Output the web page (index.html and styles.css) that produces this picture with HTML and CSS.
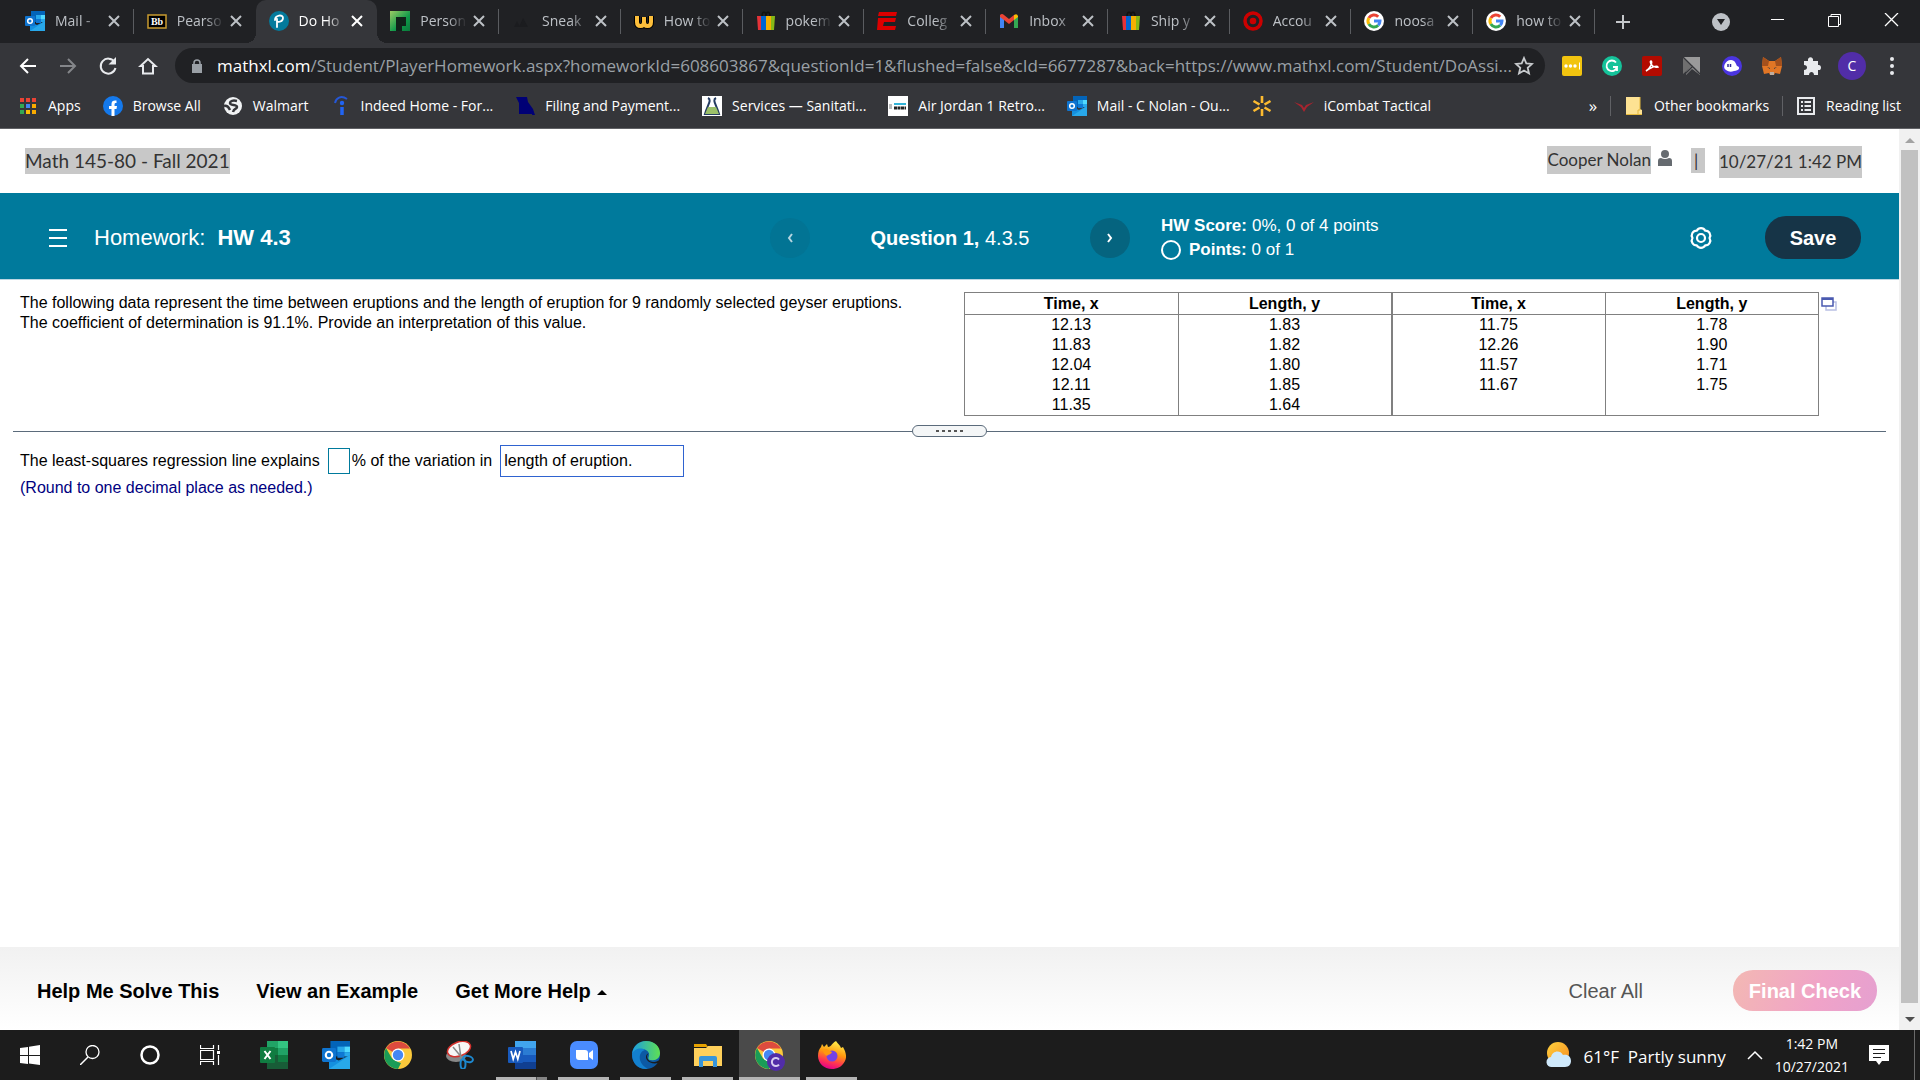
FILE: index.html
```html
<!DOCTYPE html>
<html lang="en">
<head>
    <meta charset="UTF-8">
    <meta name="viewport" content="width=device-width, initial-scale=1.0">
    <title>Do Homework - HW 4.3</title>
    <link rel="stylesheet" href="styles.css">
</head>
<body>
    <!-- shared icons -->
    <svg class="defs" aria-hidden="true">
        <defs>
            <linearGradient id="edgeBlue" x1="0" y1="0" x2="1" y2="0">
                <stop offset="0" stop-color="#1b9de2"/>
                <stop offset="1" stop-color="#5fe052"/>
            </linearGradient>
            <linearGradient id="fire" x1="0.7" y1="0" x2="0.4" y2="1">
                <stop offset="0" stop-color="#fff44f"/>
                <stop offset="0.45" stop-color="#ff980e"/>
                <stop offset="0.75" stop-color="#ff3750"/>
                <stop offset="1" stop-color="#e3008a"/>
            </linearGradient>
            <linearGradient id="sun" x1="0" y1="0" x2="1" y2="1">
                <stop offset="0" stop-color="#ffd23e"/>
                <stop offset="1" stop-color="#f68a1e"/>
            </linearGradient>
            <linearGradient id="leaf" x1="0" y1="0" x2="1" y2="1">
                <stop offset="0" stop-color="#9ccc65"/>
                <stop offset="0.6" stop-color="#0f9a4a"/>
                <stop offset="1" stop-color="#0a7a3b"/>
            </linearGradient>
        </defs>
        <symbol id="close" viewBox="0 0 12 12"><path d="M1 1l10 10M11 1L1 11" stroke="currentColor" stroke-width="2" fill="none"/></symbol>
        <symbol id="outlook" viewBox="0 0 20 20">
            <path d="M6 0h14v11H6z" fill="#0364b8"/><path d="M11 4h5v4h-5z" fill="#28a8ea"/><path d="M16 4h4v4h-4z" fill="#50d9ff"/><path d="M11 8h5v4h-5z" fill="#0f78d4"/><path d="M16 8h4v3h-4z" fill="#28a8ea"/>
            <path d="M5 11l7 3 8-4v10H5z" fill="#1490df"/><path d="M5 20l15-10v10z" fill="#28a8ea"/>
            <rect x="0" y="5" width="10" height="10" rx="1" fill="#0f74cf"/><circle cx="5" cy="10" r="2.3" fill="none" stroke="#fff" stroke-width="1.5"/>
        </symbol>
        <symbol id="bag" viewBox="0 0 20 20">
            <path d="M6 5c0-5 4-5 4 0M10 5c0-5 4-5 4 0" fill="none" stroke="#111" stroke-width="1.5"/>
            <path d="M1 5h5v14H2z" fill="#e53238"/><path d="M5 5h5v14H5z" fill="#0064d2"/><path d="M10 5h5v14h-5z" fill="#f5af02"/><path d="M15 5h4l-1 14h-3z" fill="#86b817"/>
        </symbol>
        <symbol id="google" viewBox="0 0 20 20">
            <circle cx="10" cy="10" r="10" fill="#fff"/>
            <g fill="none" stroke-width="3"><path d="M14.2 5.8A6 6 0 0 0 4.8 7" stroke="#ea4335"/><path d="M4.800 7a6 6 0 0 0 0 6" stroke="#fbbc05"/><path d="M4.800 13a6 6 0 0 0 9.400 1.200" stroke="#34a853"/><path d="M14.200 14.200A6 6 0 0 0 16 10h-6" stroke="#4285f4"/></g>
        </symbol>
        <symbol id="chrome" viewBox="0 0 28 28">
            <circle cx="14" cy="14" r="14" fill="#fbc93b"/>
            <path d="M14 14L2 7A14 14 0 0 1 26 7.500H14z" fill="#dd4b3e"/>
            <path d="M14 28A14 14 0 0 1 2 7l6 10.500 6 3.500 3 1z" fill="#1a9c57"/>
            <circle cx="14" cy="14" r="6.500" fill="#fff"/><circle cx="14" cy="14" r="5.200" fill="#4587f3"/>
        </symbol>
    </svg>

    <header class="browser">
        <div class="tabstrip">
            <div class="tabs">
                <div class="tab"><svg class="ico"><use href="#outlook"/></svg><span class="name">Mail -</span><button aria-label="Close tab"><svg><use href="#close"/></svg></button></div>
                <div class="tab nosep"><svg class="ico" viewBox="0 0 20 20"><rect x="1" y="4" width="18" height="13" fill="#000" stroke="#c79a2f" stroke-width="1.5"/><text x="10" y="14" text-anchor="middle" class="bb">Bb</text></svg><span class="name">Pearso</span><button aria-label="Close tab"><svg><use href="#close"/></svg></button></div>
                <div class="tab active"><svg class="ico" viewBox="0 0 20 20"><circle cx="10" cy="10" r="10" fill="#047a9c"/><path d="M8 16V8M6 9c0-5 8-6 8-2 0 3-3 4-6 4" fill="none" stroke="#fff" stroke-width="1.8" stroke-linecap="round"/></svg><span class="name">Do Ho</span><button aria-label="Close tab"><svg><use href="#close"/></svg></button></div>
                <div class="tab"><svg class="ico" viewBox="0 0 20 20"><path d="M0 0h20v20h-8v-5h4V6H6v14H0z" fill="url(#leaf)"/><path d="M6 6h10v9h-4v5H6z" fill="#10231a"/></svg><span class="name">Person</span><button aria-label="Close tab"><svg><use href="#close"/></svg></button></div>
                <div class="tab"><svg class="ico" viewBox="0 0 20 20"><path d="M2 16l3-6 3 6zM7 16l4-9 5 9z" fill="#1b1c1f"/></svg><span class="name">Sneak</span><button aria-label="Close tab"><svg><use href="#close"/></svg></button></div>
                <div class="tab"><svg class="ico" viewBox="0 0 20 20"><path d="M3 5v6q0 4 3.500 4 3.500 0 3.500-4V6v5q0 4 3.500 4 3.500 0 3.500-4V5" fill="none" stroke="#000" stroke-width="6"/><path d="M3 5v6q0 4 3.500 4 3.500 0 3.500-4V6v5q0 4 3.500 4 3.500 0 3.500-4V5" fill="none" stroke="#fdbf3b" stroke-width="4"/></svg><span class="name">How to</span><button aria-label="Close tab"><svg><use href="#close"/></svg></button></div>
                <div class="tab"><svg class="ico"><use href="#bag"/></svg><span class="name">pokem</span><button aria-label="Close tab"><svg><use href="#close"/></svg></button></div>
                <div class="tab"><svg class="ico" viewBox="0 0 20 20"><path d="M2 1h18l-1 4H1zM1 7h18l-1 4H7l-1 4h13l-1 4H0z" fill="#d00"/></svg><span class="name">Colleg</span><button aria-label="Close tab"><svg><use href="#close"/></svg></button></div>
                <div class="tab"><svg class="ico" viewBox="0 0 20 20"><path d="M1 5h4v12H1z" fill="#4285f4"/><path d="M15 5h4v12h-4z" fill="#34a853"/><path d="M1 4q2-2 4 0l5 4 5-4v5l-5 4-5-4-4-3z" fill="#ea4335"/><path d="M15 4q3-2 4 1v1l-4 3z" fill="#fbbc04"/></svg><span class="name">Inbox</span><button aria-label="Close tab"><svg><use href="#close"/></svg></button></div>
                <div class="tab"><svg class="ico"><use href="#bag"/></svg><span class="name">Ship y</span><button aria-label="Close tab"><svg><use href="#close"/></svg></button></div>
                <div class="tab"><svg class="ico" viewBox="0 0 20 20"><circle cx="10" cy="10" r="8" fill="none" stroke="#c00" stroke-width="3.5"/><circle cx="10" cy="10" r="3.3" fill="#c00"/></svg><span class="name">Accou</span><button aria-label="Close tab"><svg><use href="#close"/></svg></button></div>
                <div class="tab"><svg class="ico"><use href="#google"/></svg><span class="name">noosa</span><button aria-label="Close tab"><svg><use href="#close"/></svg></button></div>
                <div class="tab"><svg class="ico"><use href="#google"/></svg><span class="name">how to</span><button aria-label="Close tab"><svg><use href="#close"/></svg></button></div>
            </div>
            <button class="newtab" aria-label="New tab"><svg viewBox="0 0 16 16"><path d="M8 1v14M1 8h14" stroke="#c4c7ca" stroke-width="2"/></svg></button>
            <div class="wincontrols">
                <button aria-label="Search tabs"><svg viewBox="0 0 18 18"><circle cx="9" cy="9" r="9" fill="#bdc1c6"/><path d="M5 6h8l-4 6z" fill="#202124"/></svg></button>
                <button aria-label="Minimize"><svg viewBox="0 0 18 18"><path d="M2 6.500h13" stroke="#fff"/></svg></button>
                <button aria-label="Restore"><svg viewBox="0 0 18 18"><path d="M2.500 3.500h10v10h-10zM5 3V1.500h9.500V11.500H13" fill="none" stroke="#fff"/></svg></button>
                <button aria-label="Close"><svg viewBox="0 0 18 18"><path d="M2 0l13 13M15 0L2 13" stroke="#fff" stroke-width="1.3"/></svg></button>
            </div>
        </div>

        <div class="toolbar">
            <div class="nav">
                <button aria-label="Back"><svg viewBox="0 0 20 20"><path d="M18 10H3M10 3l-7 7 7 7" fill="none" stroke="#fff" stroke-width="2"/></svg></button>
                <button aria-label="Forward"><svg viewBox="0 0 20 20"><path d="M2 10h15M10 3l7 7-7 7" fill="none" stroke="#84868a" stroke-width="2"/></svg></button>
                <button aria-label="Reload"><svg viewBox="0 0 20 20"><path d="M16.500 6A7.500 7.500 0 1 0 17.500 12" fill="none" stroke="#e8eaed" stroke-width="2"/><path d="M18 1v7.500h-7.500z" fill="#e8eaed"/></svg></button>
                <button aria-label="Home"><svg viewBox="0 0 20 20"><path d="M5 17.500V10H2.500L10 3l7.500 7H15v7.500z" fill="none" stroke="#e8eaed" stroke-width="2"/></svg></button>
            </div>
            <div class="omnibox">
                <svg class="lock" viewBox="0 0 12 14"><path d="M1 5h10v9H1z" fill="#9aa0a6"/><path d="M3 6V4a3 3 0 0 1 6 0v2" fill="none" stroke="#9aa0a6" stroke-width="1.5"/></svg>
                <span class="url"><b>mathxl.com</b>/Student/PlayerHomework.aspx?homeworkId=608603867&amp;questionId=1&amp;flushed=false&amp;cId=6677287&amp;back=https://www.mathxl.com/Student/DoAssi...</span>
                <svg class="star" viewBox="0 0 20 20"><path d="M10 2l2.300 5.400 5.700.5-4.300 3.900 1.300 5.700-5-3-5 3 1.300-5.700L2 7.900l5.700-.5z" fill="none" stroke="#c8cbce" stroke-width="1.8"/></svg>
            </div>
            <div class="extensions">
                <svg viewBox="0 0 20 20"><rect width="20" height="20" rx="2" fill="#f2c40f"/><circle cx="4" cy="10" r="1.7" fill="#fff"/><circle cx="8.500" cy="10" r="1.7" fill="#fff"/><circle cx="13" cy="10" r="1.7" fill="#fff"/><path d="M17.500 6.500v7" stroke="#fff"/></svg>
                <svg viewBox="0 0 20 20"><circle cx="10" cy="10" r="10" fill="#15c39a"/><path d="M14 6.500A5.300 5.300 0 1 0 15 11h-4M15 11v4" fill="none" stroke="#fff" stroke-width="1.8"/></svg>
                <svg viewBox="0 0 20 20"><rect width="20" height="20" rx="2" fill="#b30b00"/><path d="M4 15c4-2 7-9 5-10-2 0 1 8 7 6-1-2-7 0-12 4z" fill="none" stroke="#fff" stroke-width="1.5"/></svg>
                <svg viewBox="0 0 20 20"><path d="M1 1h17v17L1 1z" fill="#9a9a9a"/><path d="M1 1l9 9-9 8z" fill="#6f6f6f"/><path d="M4 19v-3l6-7 8 7v3l-8-6z" fill="#888"/><path d="M1 1l17 17M3 18l8-8M8 19l3-4 4 4" fill="none" stroke="#35363a" stroke-width="1.2"/></svg>
                <svg viewBox="0 0 20 20"><circle cx="10" cy="10" r="10" fill="#4b35e0"/><path d="M4 14c-4-2-1-10 5-10 4 0 5 4 6 6 4 1 2 5-3 5-3 1-5 1-8-1z" fill="#fff"/><path d="M6 8v3M8.500 8v3" stroke="#332a9a" stroke-width="1.5"/></svg>
                <svg viewBox="0 0 20 20"><path d="M1 1l6 4h6l6-4 1 9-2 8-5-1-1 2H8l-1-2-5 1-2-8z" fill="#e27625"/><path d="M1 1l6 4-1 5-6 0zM19 1l-6 4 1 5h6z" fill="#a4501c"/><path d="M5 11l3 1v1zM15 11l-3 1v1z" fill="#233447"/><path d="M8 16h4v3H8z" fill="#c0ad9e"/></svg>
                <svg viewBox="0 0 20 20"><path d="M2 5h4c-1-5 6-5 5 0h5v4c4-1 4 6 0 5v5h-4c0-4-5-4-5 0H2v-5c4 0 4-5 0-5z" fill="#e8eaed"/></svg>
                <button class="profile" aria-label="Profile">C</button>
                <svg viewBox="0 0 20 20"><circle cx="10" cy="3" r="2" fill="#e8eaed"/><circle cx="10" cy="10" r="2" fill="#e8eaed"/><circle cx="10" cy="17" r="2" fill="#e8eaed"/></svg>
            </div>
        </div>

        <nav class="bookmarks">
            <a href="#"><svg viewBox="0 0 20 20"><g fill="#ea4335"><path d="M2 2h4v4H2zM8 2h4v4H8zM14 2h4v4h-4z"/></g><path d="M2 8h4v4H2zM2 14h4v4H2z" fill="#34a853"/><path d="M8 8h4v4H8z" fill="#4285f4"/><path d="M8 14h4v4H8z" fill="#fbbc05"/><path d="M14 8h4v4h-4zM14 14h4v4h-4z" fill="#f9ab00"/></svg>Apps</a>
            <a href="#"><svg viewBox="0 0 20 20"><circle cx="10" cy="10" r="10" fill="#1479ec"/><path d="M8.500 20v-7H6v-3h2.500V8c0-3 2-4 5-3.500V7C11.500 7 11.500 7.500 11.500 10H14l-.5 3h-2v7z" fill="#fff"/></svg>Browse All</a>
            <a href="#"><svg viewBox="0 0 20 20"><circle cx="10" cy="10" r="9" fill="#f1f3f4"/><path d="M14 5c-4-1-7 0-7 2 0 3 7 1 7 4 0 2-3 1-4 5M1 10c4-1 5 2 6 4" fill="none" stroke="#35363a" stroke-width="2.5"/></svg>Walmart</a>
            <a href="#"><svg viewBox="0 0 20 20"><path d="M4 7c1-5 6-8 12-4" fill="none" stroke="#2557d6" stroke-width="2"/><circle cx="11" cy="7" r="2.2" fill="#2164f3"/><path d="M11 11v8" stroke="#2164f3" stroke-width="3.5"/></svg>Indeed Home - For...</a>
            <a href="#"><svg viewBox="0 0 20 20"><path d="M1 1h11l1 5 5 7 2 6h-3v-1H4V7z" fill="#000075"/></svg>Filing and Payment...</a>
            <a href="#"><svg viewBox="0 0 20 20"><path d="M0 0h20v20H0z" fill="#fff"/><path d="M6 2c4 2 0 6-3 16h14C14 8 10 4 14 2" fill="none" stroke="#243b61" stroke-width="2"/><path d="M6 11h8l3 7H3z" fill="#9cc069"/></svg>Services — Sanitati...</a>
            <a href="#"><svg viewBox="0 0 20 20"><path d="M0 0h20v20H0z" fill="#fff"/><path d="M6 8h12" stroke="#34b4d8" stroke-width="2"/><path d="M1 8h3v5H1z" fill="#bbb"/><path d="M6 12h12" stroke="#222" stroke-width="3" stroke-dasharray="3 .5"/></svg>Air Jordan 1 Retro...</a>
            <a href="#"><svg><use href="#outlook"/></svg>Mail - C Nolan - Ou...</a>
            <a href="#" aria-label="Walmart"><svg viewBox="0 0 20 20"><path d="M10 0v7M10 13v7M1.500 5l6 3.500M12.500 11.500l6 3.500M18.500 5l-6 3.500M7.500 11.500l-6 3.500" stroke="#fdbb30" stroke-width="2.6"/></svg></a>
            <a href="#"><svg viewBox="0 0 20 20"><path d="M0 6l8 3 2 3 2-3 8-3-7 5-3 5-3-5z" fill="#a8242f"/></svg>iCombat Tactical</a>
            <div class="more">
                <button aria-label="More bookmarks">»</button>
                <a href="#"><svg viewBox="0 0 20 20"><path d="M2 1h14v12l2 1v5H2z" fill="#fde293"/><path d="M14 19v-5h2V1M2 18.500h16" fill="none" stroke="#e5b93c"/></svg>Other bookmarks</a>
                <a href="#"><svg viewBox="0 0 20 20"><rect x="2" y="2" width="16" height="16" fill="none" stroke="#e8eaed" stroke-width="2"/><path d="M5 6h2M5 10h2M5 14h2M8.500 6H15M8.500 10H15M8.500 14H15" stroke="#e8eaed" stroke-width="2"/></svg>Reading list</a>
            </div>
        </nav>
    </header>

    <div class="viewport">
        <main class="page">
            <div class="course">
                <span class="mark title">Math 145-80 - Fall 2021</span>
                <div class="user">
                    <span class="mark">Cooper Nolan</span>
                    <svg viewBox="0 0 16 16"><circle cx="8" cy="4" r="4" fill="#666b70"/><path d="M1 16v-5q0-3 3-3 4 2 8 0 3 0 3 3v5z" fill="#666b70"/></svg>
                    <span class="mark bar">|</span>
                    <span class="mark date">10/27/21 1:42 PM</span>
                </div>
            </div>

            <div class="banner">
                <button class="menu" aria-label="Menu"><svg viewBox="0 0 18 18"><path d="M0 1h18M0 9h18M0 17h18" stroke="#fff" stroke-width="2"/></svg></button>
                <h1>Homework:&nbsp; <b>HW 4.3</b></h1>
                <div class="question">
                    <button class="round off" aria-label="Previous question"><svg viewBox="0 0 10 12"><path d="M7 2L4 6l3 4" fill="none" stroke="#b5d5e0" stroke-width="2"/></svg></button>
                    <p><b>Question 1,</b> 4.3.5</p>
                    <button class="round" aria-label="Next question"><svg viewBox="0 0 10 12"><path d="M3 2l3 4-3 4" fill="none" stroke="#fff" stroke-width="2"/></svg></button>
                </div>
                <div class="score">
                    <p><b>HW Score:</b> 0%, 0 of 4 points</p>
                    <p><i class="ring"></i><b>Points:</b> 0 of 1</p>
                </div>
                <button class="gear" aria-label="Settings"><svg viewBox="0 0 24 24"><path d="M20.500 12A4.800 4.800 0 0 1 16.250 19.360 4.800 4.800 0 0 1 7.750 19.360 4.800 4.800 0 0 1 3.500 12 4.800 4.800 0 0 1 7.750 4.640 4.800 4.800 0 0 1 16.250 4.640 4.800 4.800 0 0 1 20.500 12z" fill="none" stroke="#fff" stroke-width="2.2" stroke-linejoin="round"/><circle cx="12" cy="12" r="4" fill="none" stroke="#fff" stroke-width="2.2"/></svg></button>
                <button class="save">Save</button>
            </div>

            <section class="problem">
                <p>The following data represent the time between eruptions and the length of eruption for 9 randomly selected geyser eruptions. The coefficient of determination is 91.1%. Provide an interpretation of this value.</p>
                <table>
                    <thead>
                        <tr><th>Time, x</th><th>Length, y</th><th>Time, x</th><th>Length, y</th></tr>
                    </thead>
                    <tbody>
                        <tr><td>12.13</td><td>1.83</td><td>11.75</td><td>1.78</td></tr>
                        <tr><td>11.83</td><td>1.82</td><td>12.26</td><td>1.90</td></tr>
                        <tr><td>12.04</td><td>1.80</td><td>11.57</td><td>1.71</td></tr>
                        <tr><td>12.11</td><td>1.85</td><td>11.67</td><td>1.75</td></tr>
                        <tr><td>11.35</td><td>1.64</td><td></td><td></td></tr>
                    </tbody>
                </table>
                <button class="popout" aria-label="Open data"><svg viewBox="0 0 16 14"><path d="M5 5h10v8H5z" fill="#fff" stroke="#b9c0e4" stroke-width="1.5"/><path d="M1 1h11v8H1z" fill="#fff" stroke="#4a5ab0" stroke-width="1.5"/><path d="M1 2h11" stroke="#4a5ab0" stroke-width="2"/></svg></button>
            </section>

            <div class="divider"><button aria-label="Resize"><i></i><i></i><i></i><i></i><i></i></button></div>

            <section class="answer">
                <div class="line">
                    <label for="pct">The least-squares regression line explains</label>
                    <input id="pct" type="text">
                    <label for="vari">% of the variation in</label>
                    <select id="vari"><option>length of eruption.</option></select>
                </div>
                <p class="hint">(Round to one decimal place as needed.)</p>
            </section>

            <footer class="actions">
                <button>Help Me Solve This</button>
                <button>View an Example</button>
                <button class="up">Get More Help</button>
                <button class="clear">Clear All</button>
                <button class="final">Final Check</button>
            </footer>
        </main>
        <div class="scrollbar"><i class="arrow"></i><i class="thumb"></i><i class="arrow down"></i></div>
    </div>

    <div class="taskbar">
        <div class="system">
            <button aria-label="Start"><svg viewBox="0 0 20 20"><path d="M0 3l8-1v8H0zM9 1.800L20 0v10H9zM0 11h8v8l-8-1zM9 11h11v9L9 18.500z" fill="#fff"/></svg></button>
            <button aria-label="Search"><svg viewBox="0 0 20 20"><circle cx="12.500" cy="7" r="6.5" fill="none" stroke="#fff" stroke-width="1.3"/><path d="M8 12l-8 8" stroke="#fff" stroke-width="1.5"/></svg></button>
            <button aria-label="Cortana"><svg viewBox="0 0 20 20"><circle cx="10" cy="10" r="8.5" fill="none" stroke="#fff" stroke-width="2.5"/></svg></button>
            <button aria-label="Task view"><svg viewBox="0 0 20 20"><path d="M.5 0v3.500h13V0M.5 5.500h13v9H.5zM.5 20v-3.500h13V20M18.500 0v5M18.500 10v10" fill="none" stroke="#fff" stroke-width="1.2"/><path d="M17 6h3v3h-3z" fill="#fff"/></svg></button>
        </div>
        <div class="apps">
            <button aria-label="Excel"><svg viewBox="0 0 28 28"><path d="M7 0h21v28H7z" fill="#21a366"/><path d="M7 7h11v7H7zM18 14h10v7H18z" fill="#107c41"/><path d="M7 14h11v14H7zM18 21h10v7H18z" fill="#185c37"/><path d="M18 0h10v7H18z" fill="#33c481"/><rect y="6" width="15" height="16" rx="1" fill="#107c41"/><path d="M4.500 10l6 8M10.500 10l-6 8" stroke="#fff" stroke-width="2"/></svg></button>
            <button aria-label="Outlook"><svg><use href="#outlook"/></svg></button>
            <button aria-label="Chrome"><svg><use href="#chrome"/></svg></button>
            <button aria-label="Snipping Tool"><svg viewBox="0 0 28 28"><ellipse cx="10" cy="15" rx="10" ry="6" fill="#888"/><ellipse cx="13" cy="8" rx="12" ry="7" fill="#f7f7f7" stroke="#d3312d" stroke-width="1.5" transform="rotate(-20 13 8)"/><path d="M7 6l10 12M13 3l2 14" stroke="#888" stroke-width="1.5"/><ellipse cx="22" cy="18" rx="5" ry="3" fill="none" stroke="#1d88cf" stroke-width="2" transform="rotate(15 22 18)"/><ellipse cx="17" cy="23" rx="2.5" ry="5" fill="none" stroke="#1d88cf" stroke-width="2"/></svg></button>
            <button class="open multi" aria-label="Word"><svg viewBox="0 0 28 28"><path d="M7 0h21v7H7z" fill="#41a5ee"/><path d="M7 7h21v7H7z" fill="#2b7cd3"/><path d="M7 14h21v7H7z" fill="#185abd"/><path d="M7 21h21v7H7z" fill="#103f91"/><rect y="6" width="15" height="16" rx="1" fill="#185abd"/><path d="M3 10l2.200 8 2.300-7 2.300 7L12 10" fill="none" stroke="#fff" stroke-width="1.7"/></svg></button>
            <button class="open" aria-label="Zoom"><svg viewBox="0 0 28 28"><rect width="28" height="28" rx="7" fill="#4a8cff"/><path d="M6 9h9q3 0 3 3v7H9q-3 0-3-3zM19 12l4-3v10l-4-3z" fill="#fff"/></svg></button>
            <button class="open" aria-label="Edge"><svg viewBox="0 0 28 28"><circle cx="14" cy="14" r="14" fill="#0c59a4"/><path d="M0 13C1 5 7 0 14 0c9 0 14 6 14 12 0 5-4 8-9 7-3 0-3-2-2-4 1-4-3-7-7-7-5 0-8 2-10 5z" fill="url(#edgeBlue)"/><path d="M0 13C2 8 9 6 13 9c-4 1-6 5-5 10 1 4 4 7 8 8.800C7 29 0 23 0 13z" fill="#1380cf"/><path d="M17 12c-4 3-1 9 4 9 3 0 5-1 8-3l-1 3-2 1c-4 1-9 0-11-3-2-3-1-6 2-7z" fill="#1c1c1c"/></svg></button>
            <button class="open" aria-label="File Explorer"><svg viewBox="0 0 28 28"><path d="M0 3h12l2 3H0z" fill="#e6a100"/><path d="M0 7h12l2-2h14v20H0z" fill="#ffd05b"/><path d="M5 26V17q0-2 2-2h14q2 0 2 2v9h-4v-6h-10v6z" fill="#3895da"/></svg></button>
            <button class="open current" aria-label="Chrome window"><svg viewBox="0 0 32 32"><use href="#chrome" x="1" y="2" width="28" height="28"/><circle cx="22" cy="23" r="9" fill="#512da8"/><path d="M25 20.500a4 4 0 1 0 0 5" fill="none" stroke="#d7cdf0" stroke-width="2"/></svg></button>
            <button class="open" aria-label="Firefox"><svg viewBox="0 0 28 28"><path d="M18 0c2 3 4 4 5 7l2-1c3 5 4 10 2 14-3 6-8 8-13 8C6 28 0 22 0 15c0-4 1-7 3-9l1-3 2 3 3-3 1 3c3 0 3-3 8-6z" fill="url(#fire)"/><circle cx="14" cy="15" r="5.5" fill="#7542e5"/><path d="M5 9c4-2 6 1 9 2-1 3-4 2-5 4-2-1-4-3-4-6z" fill="#ff980e"/></svg></button>
        </div>
        <div class="tray">
            <svg class="weather" viewBox="0 0 26 26"><circle cx="12" cy="11" r="11" fill="url(#sun)"/><path d="M6 25a5 5 0 0 1-1-10c1-6 9-8 12-2 5-1 8 2 8 6 0 3-2 6-6 6z" fill="#cfe9fb"/></svg>
            <span class="temp">61°F&nbsp; Partly sunny</span>
            <svg class="chevron" viewBox="0 0 16 10"><path d="M1 9l7-7 7 7" fill="none" stroke="#fff" stroke-width="1.5"/></svg>
            <div class="clock"><span>1:42 PM</span><span>10/27/2021</span></div>
            <svg class="notes" viewBox="0 0 20 20"><path d="M0 0h20v16h-7l-3 4-3-4H0z" fill="#fff"/><path d="M4 4.500h12M4 8.500h12M4 12.500h8" stroke="#1c1c1c" stroke-width="1.2"/></svg>
        </div>
    </div>
</body>
</html>
```
FILE: styles.css
```css
* {
    padding: 0;
    margin: 0;
    box-sizing: border-box;
}
body {
    display: flex;
    flex-direction: column;
    height: 100vh;
    overflow: hidden;
    font-family: "Liberation Sans", Arial, sans-serif;
    font-size: 16px;
    line-height: 20px;
    color: #000;
    background: #fff;
}
button {
    border: 0;
    background: none;
    font: inherit;
    color: inherit;
    cursor: pointer;
}
svg {
    display: block;
    flex: none;
}
.defs {
    position: absolute;
    width: 0;
    height: 0;
}

/* browser chrome */
.browser {
    flex: none;
    background: #35363a;
    color: #fff;
    font-family: "Open Sans", sans-serif;
    font-size: 14px;
    border-bottom: 1px solid #606165;
}
.tabstrip {
    display: flex;
    align-items: center;
    height: 43px;
    padding-left: 12px;
    background: #202124;
}
.tabs {
    display: flex;
    flex: 1;
    min-width: 0;
    height: 100%;
}
.tab {
    display: flex;
    flex: 1;
    min-width: 0;
    align-items: center;
    padding: 0 14px 2px 13px;
    color: #bdc1c6;
    background: linear-gradient(#5a5c60, #5a5c60) right center / 1px 25px no-repeat;
}
.tab.nosep {
    background: none;
}
.tab.active {
    position: relative;
    background: #35363a;
    border-radius: 10px 10px 0 0;
    color: #fff;
}
/* flared feet of the active tab */
.tab.active::before, .tab.active::after {
    content: "";
    position: absolute;
    bottom: 0;
    left: -10px;
    width: 10px;
    height: 10px;
    background: radial-gradient(circle at 0 0, transparent 10px, #35363a 10px);
}
.tab.active::after {
    left: 100%;
    background: radial-gradient(circle at 100% 0, transparent 10px, #35363a 10px);
}
.tab .name {
    flex: 1;
    min-width: 0;
    margin: 0 6px 0 10px;
    white-space: nowrap;
    mask-image: linear-gradient(90deg, #000 60%, transparent);
}
.tab svg {
    width: 12px;
    height: 12px;
}
.tab .ico {
    width: 20px;
    height: 20px;
}
.bb {
    font: bold 10px "Liberation Serif", serif;
    fill: #fff;
}
.newtab {
    width: 56px;
    display: flex;
    justify-content: center;
}
.newtab svg {
    width: 16px;
    height: 16px;
}
.wincontrols {
    display: flex;
    margin-left: 41px;
}
.wincontrols button {
    width: 57px;
    display: flex;
    justify-content: center;
}
.wincontrols svg {
    width: 18px;
    height: 18px;
}

.toolbar {
    display: flex;
    align-items: center;
    height: 45px;
    padding: 0 18px 0 8px;
}
.nav {
    display: flex;
    width: 167px;
}
.nav button {
    width: 40px;
    display: flex;
    justify-content: center;
}
.nav svg, .extensions svg, .bookmarks svg {
    width: 20px;
    height: 20px;
}
.omnibox {
    display: flex;
    flex: 1;
    min-width: 0;
    align-items: center;
    height: 35px;
    padding: 0 11px 0 16px;
    border-radius: 18px;
    background: #202124;
}
.lock {
    width: 12px;
    height: 14px;
}
.url {
    flex: 1;
    margin-left: 14px;
    overflow: hidden;
    white-space: nowrap;
    font-size: 17px;
    line-height: 24px;
    color: #9aa0a6;
}
.url b {
    font-weight: normal;
    color: #fff;
}
.star {
    width: 20px;
    height: 20px;
}
.extensions {
    display: flex;
    align-items: center;
    gap: 20px;
    margin-left: 17px;
}
.profile {
    width: 28px;
    height: 28px;
    margin: 0 -4px;
    border-radius: 50%;
    background: #512da8;
    color: #fff;
}

.bookmarks {
    display: flex;
    align-items: center;
    gap: 22px;
    height: 40px;
    padding: 0 19px 4px 18px;
    white-space: nowrap;
}
.bookmarks a {
    display: flex;
    align-items: center;
    gap: 10px;
    color: #fff;
    text-decoration: none;
}
.more {
    display: flex;
    align-items: center;
    gap: 13px;
    margin-left: auto;
}
.more button {
    font-size: 17px;
}
.more a {
    padding-left: 13px;
    border-left: 1px solid #606165;
}

/* page */
.viewport {
    display: flex;
    flex: 1;
    min-height: 0;
}
.page {
    display: flex;
    flex: 1;
    min-width: 0;
    flex-direction: column;
}
.course {
    display: flex;
    justify-content: space-between;
    align-items: flex-start;
    height: 64px;
    padding: 17px 37px 0 25px;
    font-family: Lato, "Open Sans", sans-serif;
    color: #333;
}
.mark {
    background: #c8c8c8;
    font-size: 17px;
    line-height: 28px;
}
.mark.title {
    margin-top: 2px;
    font-size: 19px;
    line-height: 26px;
}
.user {
    display: flex;
    align-items: flex-start;
}
.user svg {
    width: 16px;
    height: 16px;
    margin: 4px 18px 0 6px;
}
.mark.bar {
    width: 14px;
    margin: 2px 14px 0 0;
    padding-left: 3px;
    line-height: 25px;
}
.mark.date {
    line-height: 32px;
}

.banner {
    display: flex;
    align-items: center;
    height: 87px;
    padding: 3px 38px 0 49px;
    border-bottom: 1px solid #bcd6e2;
    background: #007a9c;
    color: #fff;
    font-size: 20px;
    line-height: 24px;
}
.menu svg {
    width: 18px;
    height: 18px;
}
.banner h1 {
    width: 676px;
    margin-left: 27px;
    font-size: 22px;
    font-weight: normal;
}
.question {
    display: flex;
    align-items: center;
    justify-content: space-between;
    width: 360px;
}
.round {
    display: flex;
    align-items: center;
    justify-content: center;
    width: 40px;
    height: 40px;
    border-radius: 50%;
    background: #05647f;
}
.round.off {
    background: #027494;
}
.round svg {
    width: 10px;
    height: 12px;
}
.score {
    margin-left: 31px;
    font-size: 17px;
}
.score p {
    display: flex;
    align-items: center;
    gap: 5px;
}
.ring {
    width: 20px;
    height: 20px;
    margin-right: 3px;
    border: 2px solid #fff;
    border-radius: 50%;
}
.gear {
    margin-left: auto;
}
.gear svg {
    width: 24px;
    height: 24px;
}
.save {
    width: 96px;
    height: 43px;
    margin-left: 52px;
    border-radius: 21px;
    background: #163447;
    font-weight: bold;
}

.problem {
    display: flex;
    align-items: flex-start;
    padding: 12px 62px 0 20px;
}
.problem p {
    flex: 1;
    padding: 1px 40px 0 0;
}
table {
    width: 855px;
    border: 1px solid #808080;
    border-collapse: collapse;
    table-layout: fixed;
    text-align: center;
}
th {
    height: 22px;
    border: 1px solid #808080;
}
td {
    height: 20px;
    border-left: 1px solid #808080;
}
th:nth-child(3), td:nth-child(3) {
    border-left-width: 2px;
}
.popout {
    margin: 5px 0 0 2px;
}
.popout svg {
    width: 16px;
    height: 14px;
}

.divider {
    display: flex;
    justify-content: center;
    margin: 9px 13px 0;
    background: linear-gradient(#5b6b7b, #5b6b7b) center / 100% 1px no-repeat;
}
.divider button {
    display: flex;
    align-items: center;
    justify-content: center;
    gap: 3px;
    width: 75px;
    height: 12px;
    border: 1px solid #5b6b7b;
    border-radius: 6px;
    background: #f4f6f7;
}
.divider i {
    width: 3px;
    height: 2px;
    background: #555;
}

.answer {
    flex: 1;
    padding: 8px 20px 0;
}
.line {
    display: flex;
    align-items: center;
}
.line input {
    width: 22px;
    height: 26px;
    margin: 0 2px 0 8px;
    border: 1px solid #007a9c;
}
.line select {
    width: 184px;
    height: 32px;
    margin-left: 8px;
    padding-left: 3px;
    border: 1px solid #2f63d0;
    background: #fff;
    appearance: none;
    font: inherit;
    color: #000;
}
.hint {
    padding-top: 1px;
    color: #000080;
}

.actions {
    display: flex;
    align-items: center;
    height: 83px;
    padding: 4px 22px 0 37px;
    background: linear-gradient(#f1f1f1, #fff);
    font-size: 20px;
    line-height: 24px;
    font-weight: bold;
}
.actions button {
    margin-right: 37px;
}
.actions .up::after {
    content: "";
    display: inline-block;
    margin: 0 0 3px 6px;
    border: 5px solid transparent;
    border-top: 0;
    border-bottom-color: #000;
}
.actions .clear {
    margin: 0 90px 0 auto;
    font-weight: normal;
    color: #555;
}
.actions .final {
    width: 144px;
    height: 41px;
    margin: 0;
    border-radius: 20px;
    background: linear-gradient(110deg, #f3b8b3, #f0a3c8 60%, #e5a0d0);
    color: #fff;
}

.scrollbar {
    display: flex;
    flex-direction: column;
    align-items: center;
    width: 21px;
    background: #f1f1f1;
}
.arrow {
    height: 21px;
    padding-top: 9px;
}
.arrow::before {
    content: "";
    display: block;
    border: 5px solid transparent;
    border-top: 0;
    border-bottom-color: #a3a3a3;
}
.arrow.down {
    height: 27px;
    padding-top: 14px;
}
.arrow.down::before {
    border-top: 5px solid #505050;
    border-bottom: 0;
}
.thumb {
    flex: 1;
    width: 17px;
    background: #c1c1c1;
}

/* taskbar */
.taskbar {
    display: flex;
    flex: none;
    height: 50px;
    background: #1c1c1c;
    color: #fff;
    font-family: "Open Sans", sans-serif;
}
.system, .apps {
    display: flex;
}
.system button {
    display: flex;
    align-items: center;
    justify-content: center;
    width: 60px;
}
.system svg, .notes {
    width: 20px;
    height: 20px;
}
.apps {
    gap: 1px;
    margin-left: 3px;
}
.apps button {
    display: flex;
    align-items: center;
    justify-content: center;
    width: 61px;
    border: 0 solid #1c1c1c;
    border-width: 0 5px;
}
.apps svg {
    width: 28px;
    height: 28px;
}
.apps .open {
    background: linear-gradient(#b4b4b4, #b4b4b4) bottom / 100% 3px no-repeat;
}
.apps .multi {
    background: linear-gradient(90deg, #b4b4b4 40px, #1c1c1c 40px, #858585 41px) bottom / 100% 3px no-repeat;
}
.apps .current {
    border: 0;
    background-color: #4a4a4a;
}
.apps .current svg {
    width: 32px;
    height: 32px;
}
.tray {
    display: flex;
    align-items: center;
    margin-left: auto;
    margin-right: 5px;
    padding-right: 25px;
    border-right: 1px solid #6a6a6a;
}
.weather {
    width: 26px;
    height: 26px;
}
.temp {
    margin: 3px 21px 0 12px;
    font-size: 17px;
}
.chevron {
    width: 16px;
    height: 10px;
}
.clock {
    display: flex;
    flex-direction: column;
    align-items: center;
    gap: 3px;
    margin: 0 20px 0 12px;
    font-size: 14px;
}
```
